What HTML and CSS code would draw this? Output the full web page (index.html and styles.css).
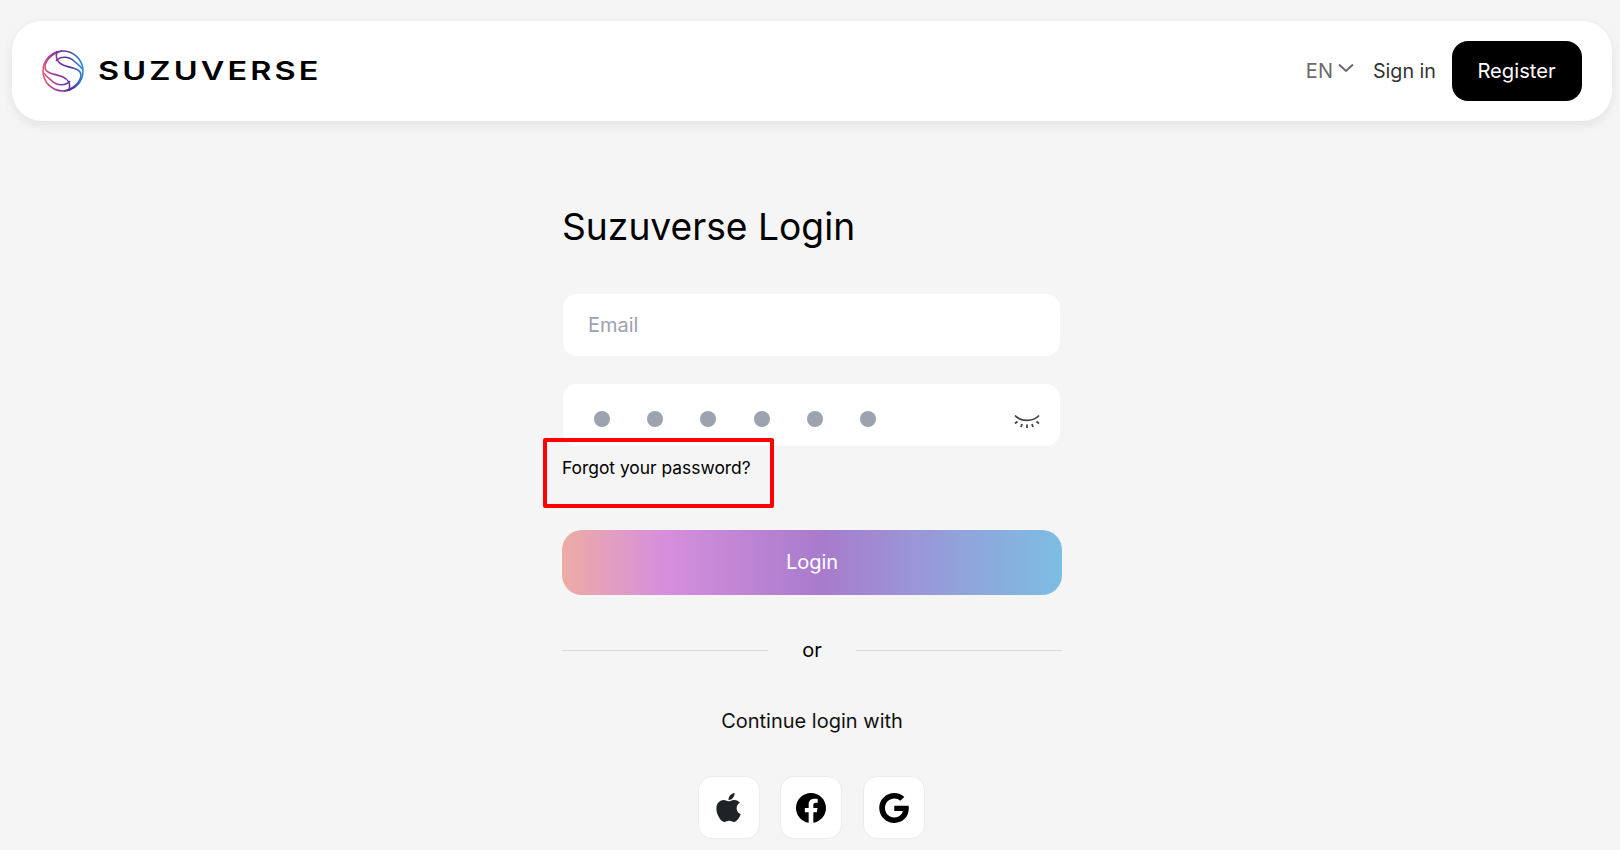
FILE: index.html
```html
<!DOCTYPE html>
<html lang="en">
<head>
<meta charset="utf-8">
<title>Suzuverse Login</title>
<link rel="stylesheet" href="styles.css">
</head>
<body>
<header class="topbar">
  <a class="brand" href="#">
    <svg class="brand-mark" viewBox="0 0 42 42" fill="none" aria-hidden="true">
      <defs>
        <linearGradient id="lg" gradientUnits="userSpaceOnUse" x1="0" y1="24" x2="42" y2="18">
          <stop offset="0" stop-color="#e8606a"/>
          <stop offset="0.28" stop-color="#a0359a"/>
          <stop offset="0.65" stop-color="#54309f"/>
          <stop offset="1" stop-color="#2496dc"/>
        </linearGradient>
      </defs>
      <g stroke="url(#lg)" stroke-width="1.600">
        <circle cx="21" cy="21" r="20"/>
        <path d="M20 1C10 3 3 11 3 17C3 24 14 24 21 27C26 29 29 34 27 41"/>
        <path d="M22 41C32 39 39 31 39 25C39 18 28 18 21 15C16 13 13 8 15 1"/>
        <path d="M14 11C18 6 27 6 32 11C35 14 38 15 40 19"/>
        <path d="M28 31C24 36 15 36 10 31C7 28 4 27 2 23"/>
      </g>
    </svg>
    <span class="brand-name">SUZUVERSE</span>
  </a>
  <nav class="topnav">
    <button class="lang" type="button">EN
      <svg class="chevron" viewBox="0 0 16 10" fill="none" aria-hidden="true"><path d="M1 1.500L8 8L15 1.500" stroke="#6b6b6b" stroke-width="2"/></svg>
    </button>
    <a class="signin" href="#">Sign in</a>
    <a class="register" href="#">Register</a>
  </nav>
</header>

<main class="login">
  <h1 class="title">Suzuverse Login</h1>
  <div class="field email"><span class="placeholder">Email</span></div>
  <div class="field password">
    <span class="dots"><i></i><i></i><i></i><i></i><i></i><i></i></span>
    <svg class="eye" viewBox="0 0 26 16" fill="none" aria-hidden="true">
      <path d="M1 1.500C7 8 19 8 25 1.500" stroke="#444" stroke-width="1.800"/>
      <path d="M3.500 7.500L1 9.500M8 10L7 13M13 10.500V14M18 10L19 13M22.500 7.500L25 9.500" stroke="#444" stroke-width="1.800"/>
    </svg>
  </div>
  <div class="forgot-row">
    <a class="forgot" href="#">Forgot your password?</a>
    <span class="highlight"></span>
  </div>
  <button class="submit" type="button">Login</button>
  <div class="divider"><span class="rule"></span><span class="or">or</span><span class="rule"></span></div>
  <p class="continue">Continue login with</p>
  <div class="socials">
    <a class="social" href="#" aria-label="Apple"><svg class="apple" viewBox="0 0 384 512" aria-hidden="true"><path d="M318.700 268.700c-.2-36.700 16.400-64.400 50-84.800-18.800-26.900-47.200-41.700-84.700-44.600-35.500-2.800-74.300 20.700-88.500 20.700-15 0-49.400-19.700-76.400-19.700C63.300 141.200 4 184.800 4 273.500q0 39.300 14.400 81.200c12.800 36.700 59 126.700 107.200 125.200 25.200-.6 43-17.900 75.800-17.900 31.800 0 48.300 17.900 76.400 17.900 48.600-.7 90.400-82.500 102.600-119.300-65.200-30.700-61.700-90-61.700-91.900zm-56.600-164.200c27.300-32.400 24.800-61.900 24-72.500-24.100 1.400-52 16.400-67.900 34.900-17.500 19.800-27.800 44.300-25.600 71.900 26.100 2 49.900-11.400 69.500-34.300z"/></svg></a>
    <a class="social" href="#" aria-label="Facebook"><svg class="brand-icon" viewBox="8 8 496 496" aria-hidden="true"><path d="M504 256C504 119 393 8 256 8S8 119 8 256c0 123.780 90.690 226.380 209.250 245V327.690h-63V256h63v-54.640c0-62.150 37-96.480 93.670-96.480 27.140 0 55.520 4.840 55.520 4.840v61h-31.280c-30.800 0-40.410 19.120-40.410 38.730V256h68.780l-11 71.690h-57.780V501C413.310 482.380 504 379.780 504 256z"/></svg></a>
    <a class="social" href="#" aria-label="Google"><svg class="brand-icon" viewBox="0 8 488 496" aria-hidden="true"><path d="M488 261.800C488 403.300 391.100 504 248 504 110.800 504 0 393.200 0 256S110.800 8 248 8c66.800 0 123 24.500 166.300 64.900l-67.500 64.900C258.500 52.600 94.300 116.600 94.300 256c0 86.500 69.100 156.600 153.700 156.600 98.200 0 135-70.400 140.800-106.900H248v-85.300h236.100c2.300 12.700 3.900 24.900 3.900 41.400z"/></svg></a>
  </div>
</main>
</body>
</html>
```
FILE: styles.css
```css
* { box-sizing: border-box; }
html, body { height: 100%; overflow: hidden; }
body {
  margin: 0;
  background: #f5f5f5;
  font-family: Inter, "Liberation Sans", sans-serif;
  color: #000;
  padding-top: 21px;
}
a { color: inherit; text-decoration: none; }
button { font: inherit; border: 0; background: none; padding: 0; }

.topbar {
  height: 100px;
  margin: 0 8px 0 12px;
  padding: 0 30px;
  display: flex;
  align-items: center;
  justify-content: space-between;
  background: #fff;
  border-radius: 30px;
  box-shadow: 0 4px 12px rgba(0, 0, 0, 0.08);
}
.brand { display: flex; align-items: center; gap: 14px; }
.brand-mark { width: 42px; height: 42px; display: block; }
.brand-name {
  display: inline-block;
  font-size: 26px;
  font-weight: 600;
  letter-spacing: 2.500px;
  line-height: 1;
  transform: scaleX(1.25);
  transform-origin: left center;
}
.topnav { display: flex; align-items: center; }
.lang {
  display: flex;
  align-items: center;
  gap: 5px;
  font-size: 20px;
  color: #6b6b6b;
  margin-right: 19px;
}
.chevron { width: 16px; height: 10px; margin-top: -6px; }
.signin { font-size: 19.700px; color: #333; margin-right: 16px; }
.register {
  width: 130px;
  height: 60px;
  padding: 0 1px 2px 0;
  display: flex;
  align-items: center;
  justify-content: center;
  background: #000;
  color: #fff;
  font-size: 20.200px;
  border-radius: 16px;
}

.login {
  width: 500px;
  margin: 0 0 0 562px;
  padding-top: 81px;
}
.title {
  margin: 0 0 42px;
  font-size: 37.200px;
  line-height: 50px;
  font-weight: 400;
}
.field {
  width: 497px;
  height: 62px;
  margin-left: 1px;
  background: #fff;
  border-radius: 14px;
  padding: 0 20px 0 25px;
  display: flex;
  align-items: center;
}
.email { margin-bottom: 28px; }
.placeholder { font-size: 20px; color: #9ca3af; }
.password { justify-content: space-between; }
.dots { display: flex; gap: 37.200px; margin-left: 6px; margin-top: 7px; }
.dots i { width: 16px; height: 16px; border-radius: 50%; background: #9ca3af; display: block; }
.eye { width: 26px; height: 16px; margin-top: 14px; }
.forgot-row { position: relative; height: 84px; padding-top: 11px; }
.forgot { font-size: 17.400px; line-height: 22px; display: block; }
.highlight {
  position: absolute;
  left: -19px;
  top: -8px;
  width: 231px;
  height: 70px;
  border: 4px solid #f00;
  border-radius: 2px;
}
.submit {
  display: flex;
  align-items: center;
  justify-content: center;
  width: 100%;
  height: 65px;
  padding: 0 0 2px 0;
  border-radius: 20px;
  color: #fff;
  font-size: 20px;
  background: linear-gradient(90deg, #edaca4 0%, #d78fdc 20%, #a87bcc 52%, #979cd9 75%, #7cbee2 100%);
}
.divider { display: flex; align-items: center; gap: 34px; margin-top: 43px; height: 24px; }
.rule { flex: 1; height: 1px; background: #d9d9d9; }
.or { font-size: 20px; line-height: 24px; }
.continue { margin: 47px 0 0; text-align: center; font-size: 20px; line-height: 24px; color: #111; }
.socials { display: flex; justify-content: center; gap: 20.500px; margin-top: 43px; padding-right: 2px; }
.social {
  width: 62px;
  height: 63px;
  display: flex;
  align-items: center;
  justify-content: center;
  background: #fff;
  border: 1px solid #ececec;
  border-radius: 14px;
}
.apple { width: 25px; height: 33px; fill: #1f2328; }
.brand-icon { width: 30px; height: 30px; fill: #000; }
```
